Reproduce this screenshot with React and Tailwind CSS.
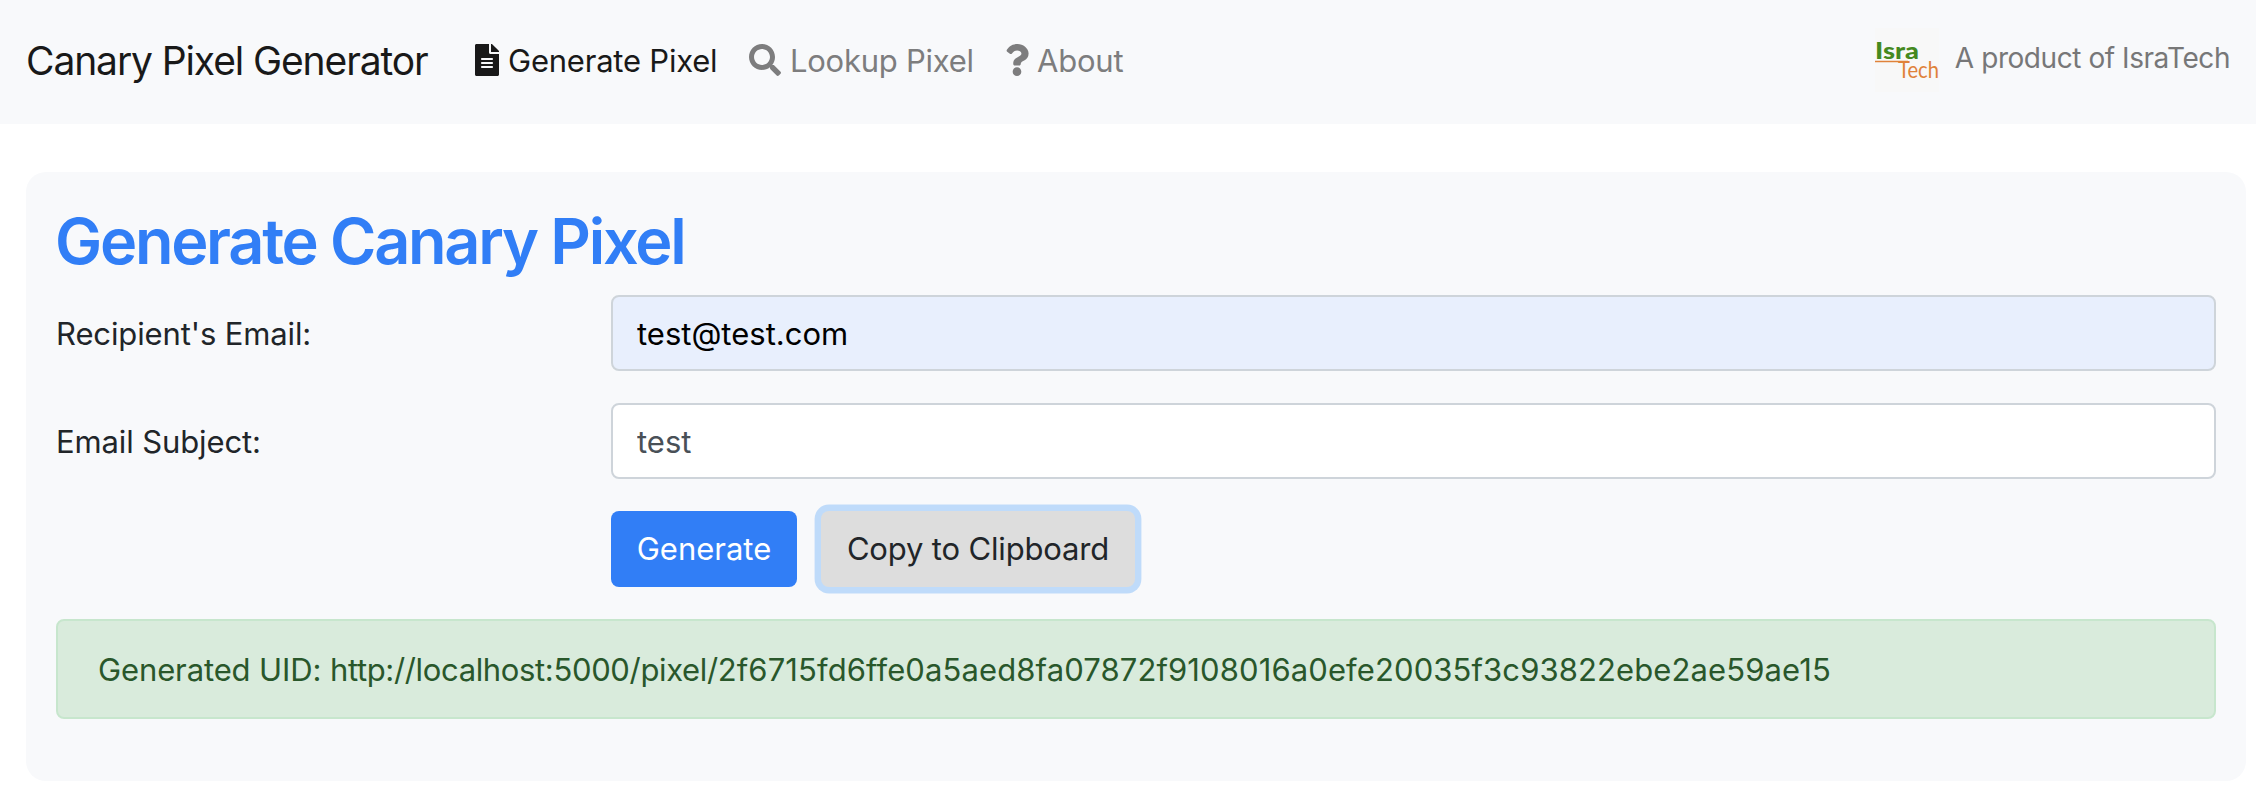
import { FaFileAlt, FaSearch, FaQuestion } from "react-icons/fa";

function Logo() {
  return (
    <svg className="h-16 w-16 overflow-visible bg-[#f8f8f8]" viewBox="0 0 64 64">
      <text x="0" y="30.5" className="fill-[#45891f] font-['Lato'] text-[23px] font-black" textLength="44" lengthAdjust="spacingAndGlyphs">Isra</text>
      <path d="M0 33.6H33" className="stroke-[#e0823a]" strokeWidth="1.5" />
      <text x="23" y="49.5" className="fill-[#e0823a] font-['Lato'] text-[23px] font-normal" textLength="41" lengthAdjust="spacingAndGlyphs">Tech</text>
    </svg>
  );
}

function NavLink({ icon: Icon, iconClass, className, active, children }) {
  return (
    <a className={`flex items-center ${active ? "text-[#191919]" : "text-[#7d7d7e]"}`}>
      <Icon className={`mb-0.5 h-8 shrink-0 ${iconClass}`} />
      <span className={`text-[31px] leading-12 whitespace-nowrap ${className}`}>{children}</span>
    </a>
  );
}

function Field({ label, value, autofilled }) {
  return (
    <div className="mb-8 flex">
      <label className="w-[555px] shrink-0 pt-3.5 leading-[49px] tracking-[-0.12px]">{label}</label>
      <input
        readOnly
        value={value}
        className={`h-[76px] min-w-0 flex-1 rounded-lg border-2 border-[#ced4da] px-6 pt-px outline-none ${autofilled ? "bg-[#e8effd] text-black" : "bg-white text-[#495057]"}`}
      />
    </div>
  );
}

export default function App() {
  return (
    <div className="h-[786px] overflow-hidden bg-white font-['Inter',sans-serif] text-[31px] text-[#212529]">
      <nav className="flex h-[124px] items-center bg-[#f8f9fb] pr-[26px] pb-0.5 pl-[26px]">
        <span className="w-[449px] text-[39px] tracking-[-1.11px] whitespace-nowrap text-[#191919]">Canary Pixel Generator</span>
        <NavLink icon={FaFileAlt} active iconClass="w-6" className="ml-[9px] w-[241px] tracking-[-0.22px]">Generate Pixel</NavLink>
        <NavLink icon={FaSearch} iconClass="w-8" className="ml-[9px] w-[215px] tracking-[-0.26px]">Lookup Pixel</NavLink>
        <NavLink icon={FaQuestion} iconClass="w-6" className="ml-[8px] tracking-[-0.2px]">About</NavLink>
        <div className="ml-auto flex items-center pb-0.5 text-[#777778]">
          <Logo />
          <span className="ml-4 pb-[5px] text-[28px] tracking-[-0.44px] whitespace-nowrap">A product of IsraTech</span>
        </div>
      </nav>

      <main className="mt-12 mr-2.5 ml-[26px] h-[609px] rounded-[20px] bg-[#f8f9fb] px-[30px] pt-[31px]">
        <h2 className="mb-[15px] -ml-[1px] text-[63px] leading-[77px] font-semibold tracking-[-2.28px] text-[#317ef6]">Generate Canary Pixel</h2>
        <Field label="Recipient's Email:" value="test@test.com" autofilled />
        <Field label="Email Subject:" value="test" />
        <div className="mb-8 ml-[555px] flex gap-6">
          <button className="h-[76px] w-[186px] rounded-lg bg-[#317ef6] pt-px text-white">Generate</button>
          <button className="h-[76px] w-[314px] rounded-lg bg-[#dddddd] pt-px tracking-[-0.16px] shadow-[0_0_0_6.4px_#bfdbfa]">Copy to Clipboard</button>
        </div>
        <div className="h-[100px] rounded-lg border-2 border-[#c7e6cd] bg-[#d9ebdc] px-10 pt-[25px] leading-12 whitespace-nowrap text-[#29572b]">
          <span className="tracking-[-0.12px]">Generated UID: </span>
          <span className="tracking-[-0.35px]">http://localhost:5000/pixel/</span>
          <span className="tracking-[0.11px]">2f6715fd6ffe0a5aed8fa07872f9108016a0efe20035f3c93822ebe2ae59ae15</span>
        </div>
      </main>
    </div>
  );
}
